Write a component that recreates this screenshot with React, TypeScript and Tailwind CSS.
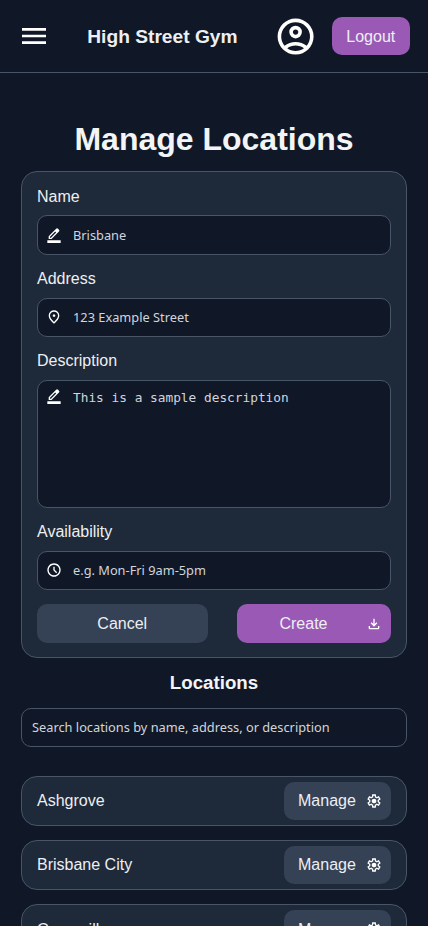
import type { ReactNode } from "react";

const icons = {
  menu: "M120-240v-80h720v80H120Zm0-200v-80h720v80H120Zm0-200v-80h720v80H120Z",
  account:
    "M234-276q51-39 114-61.5T480-360q69 0 132 22.5T726-276q35-41 54.5-93T800-480q0-133-93.5-226.5T480-800q-133 0-226.5 93.5T160-480q0 59 19.5 111t54.5 93Zm246-164q-59 0-99.5-40.5T340-580q0-59 40.5-99.5T480-720q59 0 99.5 40.5T620-580q0 59-40.5 99.5T480-440Zm0 360q-83 0-156-31.5T197-197q-54-54-85.5-127T80-480q0-83 31.5-156T197-763q54-54 127-85.5T480-880q83 0 156 31.5T763-763q54 54 85.5 127T880-480q0 83-31.5 156T763-197q-54 54-127 85.5T480-80Zm0-80q53 0 100-15.5t86-44.5q-39-29-86-44.5T480-280q-53 0-100 15.5T294-220q39 29 86 44.5T480-160Zm0-360q26 0 43-17t17-43q0-26-17-43t-43-17q-26 0-43 17t-17 43q0 26 17 43t43 17Z",
  edit: "M80 0v-160h800V0H80Zm160-320h56l312-311-29-29-28-28-311 312v56Zm-80 80v-170l448-447q11-11 25.5-17t30.5-6q16 0 31 6t27 18l55 56q12 11 17.5 26t5.5 31q0 15-5.5 29.5T777-687L330-240H160Z",
  pin: "M480-480q33 0 56.5-23.5T560-560q0-33-23.5-56.5T480-640q-33 0-56.5 23.5T400-560q0 33 23.5 56.5T480-480Zm0 294q122-112 181-203.5T720-552q0-109-69.5-178.5T480-800q-101 0-170.5 69.5T240-552q0 71 59 162.5T480-186Zm0 106Q319-217 239.5-334.5T160-552q0-150 96.5-239T480-880q127 0 223.5 89T800-552q0 100-79.5 217.5T480-80Z",
  clock:
    "m612-292 56-56-148-148v-184h-80v216l172 172ZM480-80q-83 0-156-31.5T197-197q-54-54-85.5-127T80-480q0-83 31.5-156T197-763q54-54 127-85.5T480-880q83 0 156 31.5T763-763q54 54 85.5 127T880-480q0 83-31.5 156T763-197q-54 54-127 85.5T480-80Zm0-80q133 0 226.5-93.5T800-480q0-133-93.5-226.5T480-800q-133 0-226.5 93.5T160-480q0 133 93.5 226.5T480-160Z",
  download:
    "M480-320 280-520l56-58 104 104v-326h80v326l104-104 56 58-200 200ZM240-160q-33 0-56.5-23.5T160-240v-120h80v120h480v-120h80v120q0 33-23.5 56.5T720-160H240Z",
  settings:
    "m370-80-16-128q-13-5-24.5-12T307-235l-119 50L78-375l103-78q-1-7-1-13.5v-27q0-6.5 1-13.5L78-585l110-190 119 50q11-8 23-15t24-12l16-128h220l16 128q13 5 24.5 12t22.5 15l119-50 110 190-103 78q1 7 1 13.5v27q0 6.5-2 13.5l103 78-110 190-118-50q-11 8-23 15t-24 12L590-80H370Zm70-80h79l14-106q31-8 57.5-23.5T639-327l99 41 39-68-86-65q5-14 7-29.5t2-31.5q0-16-2-31.5t-7-29.5l86-65-39-68-99 42q-22-23-48.5-38.5T533-694l-13-106h-79l-14 106q-31 8-57.5 23.5T321-633l-99-41-39 68 86 64q-5 15-7 30t-2 32q0 16 2 31t7 30l-86 65 39 68 99-42q22 23 48.5 38.5T427-266l13 106Zm42-180q58 0 99-41t41-99q0-58-41-99t-99-41q-59 0-99.5 41T342-480q0 58 40.5 99t99.5 41Z",
};

function Icon({ name, className }: { name: keyof typeof icons; className: string }) {
  return (
    <svg viewBox="0 -960 960 960" fill="white" className={`shrink-0 overflow-visible ${className}`} aria-hidden="true">
      <path d={icons[name]} />
    </svg>
  );
}

const inputText =
  "min-w-0 flex-1 bg-transparent text-[12.8px] outline-none placeholder:text-gray-300 placeholder:opacity-100";
const sans = "font-['Noto_Sans',sans-serif]";
const mono = "font-['DejaVu_Sans_Mono',monospace]";

function Field({ label, className, children }: { label: string; className: string; children: ReactNode }) {
  return (
    <label className={`flex flex-col ${className}`}>
      <span className="h-[29px] text-base leading-[20px]">{label}</span>
      {children}
    </label>
  );
}

const box = "flex rounded-[10px] border border-[#485567] bg-gray-900 pl-2";

export default function App() {
  return (
    <div className="h-[926px] overflow-hidden bg-gray-900 font-['Liberation_Sans',Arial,sans-serif] text-base text-[#edeff2]">
      <header className="flex h-[73px] items-center border-b border-[#485567] pr-[18px] pl-[18px]">
        <button aria-label="Menu">
          <Icon name="menu" className="size-8" />
        </button>
        <div className="flex-1 pt-[2px] pl-[0.8px] text-center text-[19.2px] font-bold">High Street Gym</div>
        <Icon name="account" className="mt-px size-[43.2px]" />
        <button className="ml-[14.8px] h-[38px] w-[78px] rounded-[10px] bg-[#9b59b6] pt-[2px] pr-[0.5px]">Logout</button>
      </header>

      <main className="flex flex-col px-[21px] pt-[47px]">
        <h1 className="h-[51px] text-center text-[32px] leading-[38px] font-bold text-gray-100">Manage Locations</h1>

        <form className="flex h-[487px] flex-col rounded-2xl border border-[#485567] bg-gray-800 px-[15px] pt-[14px]">
          <Field label="Name" className="h-[83px] [&>span]:pt-px">
            <div className={`${box} h-10 items-center`}>
              <Icon name="edit" className="mb-px size-4" />
              <input placeholder="Brisbane" className={`${inputText} ${sans} ml-[11px] pt-px`} />
            </div>
          </Field>
          <Field label="Address" className="h-[82px]">
            <div className={`${box} h-[39px] items-center`}>
              <Icon name="pin" className="mb-px size-4" />
              <input placeholder="123 Example Street" className={`${inputText} ${sans} ml-[11px]`} />
            </div>
          </Field>
          <Field label="Description" className="h-[171px]">
            <div className={`${box} h-32 items-start pt-[7px]`}>
              <Icon name="edit" className="size-4" />
              <textarea
                placeholder="This is a sample description"
                className={`${inputText} ${mono} mt-px ml-[11px] h-28 resize-none leading-[18px]`}
              />
            </div>
          </Field>
          <Field label="Availability" className="h-[82px]">
            <div className={`${box} h-[39px] items-center`}>
              <Icon name="clock" className="mb-px size-4" />
              <input placeholder="e.g. Mon-Fri 9am-5pm" className={`${inputText} ${sans} ml-[11px]`} />
            </div>
          </Field>
          <div className="flex justify-between">
            <button type="button" className="h-[39px] w-[171px] rounded-[10px] bg-[#354155] pr-[0.5px]">
              Cancel
            </button>
            <button type="button" className="flex h-[39px] w-[154px] items-center rounded-[10px] bg-[#9b59b6] pr-[9px]">
              <span className="flex-1 pl-1 text-center">Create</span>
              <Icon name="download" className="size-4" />
            </button>
          </div>
        </form>

        <h2 className="mt-[14px] h-[36px] text-center text-[18.7px] leading-[22px] font-bold text-gray-100">
          Locations
        </h2>
        <div className="flex h-[39px] items-center rounded-[10px] border border-[#485567] px-[10px]">
          <input
            placeholder="Search locations by name, address, or description"
            className={`${inputText} ${sans}`}
          />
        </div>

        <ul className="mt-[29px] flex flex-col gap-[14px]">
          {["Ashgrove", "Brisbane City", "Graceville"].map((place) => (
            <li
              key={place}
              className="group flex h-[50px] items-center justify-between rounded-2xl border border-[#485567] bg-gray-800 px-[15px]"
            >
              <span className="group-last:pt-[2px]">{place}</span>
              <button className="flex h-[38px] w-[107px] items-center justify-between rounded-[10px] bg-[#354155] pr-[9px] pl-[14px]">
                <span className="group-last:pt-[2px]">Manage</span>
                <Icon name="settings" className="size-4" />
              </button>
            </li>
          ))}
        </ul>
      </main>
    </div>
  );
}
